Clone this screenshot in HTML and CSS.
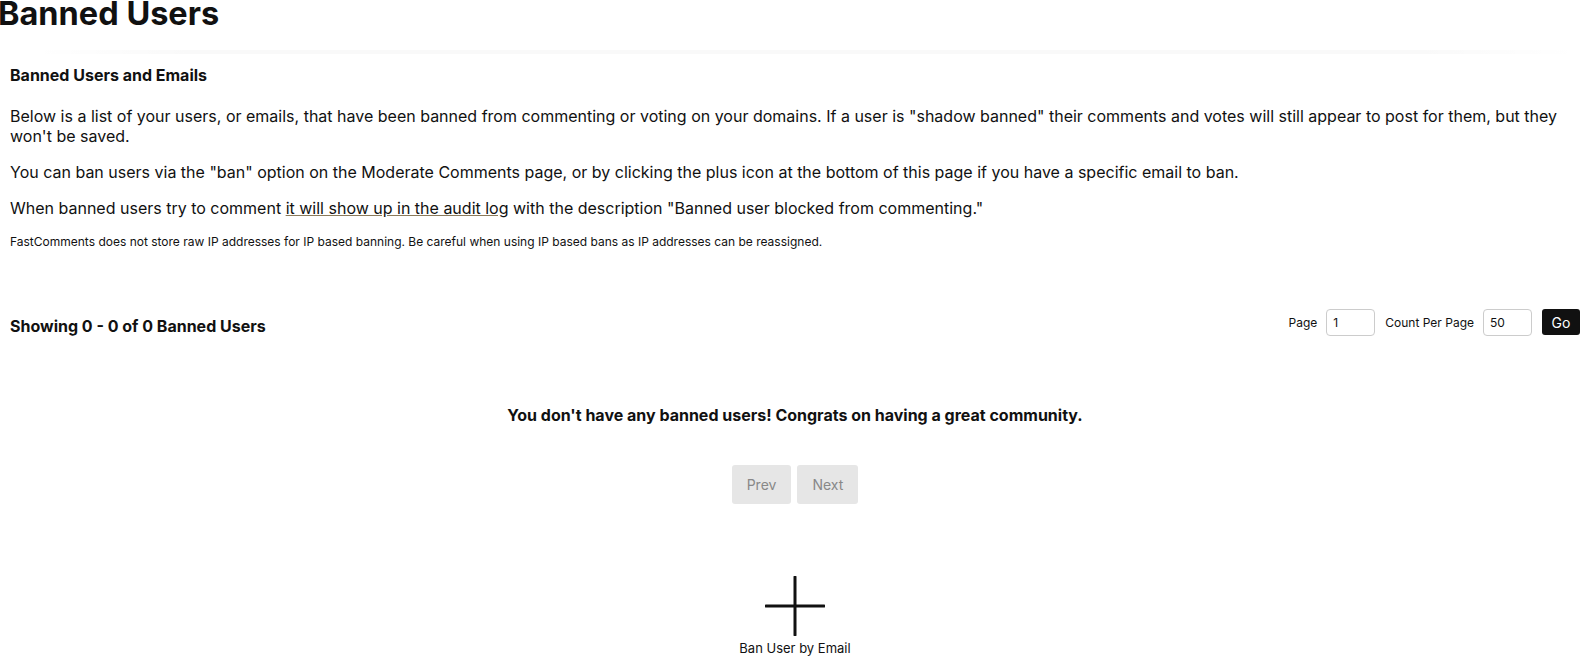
FILE: index.html
```html
<!DOCTYPE html>
<html>
<head>
<meta charset="utf-8">
<link rel="stylesheet" href="styles.css">
</head>
<body>
<h1 class="page-title">Banned Users</h1>
<div class="divider"></div>
<div class="content">
  <div class="section-title">Banned Users and Emails</div>
  <p class="para first">Below is a list of your users, or emails, that have been banned from commenting or voting on your domains. If a user is "shadow banned" their comments and votes will still appear to post for them, but they won't be saved.</p>
  <p class="para">You can ban users via the "ban" option on the Moderate Comments page, or by clicking the plus icon at the bottom of this page if you have a specific email to ban.</p>
  <p class="para">When banned users try to comment <a class="link" href="#">it will show up in the audit log</a> with the description "Banned user blocked from commenting."</p>
  <p class="note">FastComments does not store raw IP addresses for IP based banning. Be careful when using IP based bans as IP addresses can be reassigned.</p>

  <div class="toolbar">
    <div class="showing">Showing 0 - 0 of 0 Banned Users</div>
    <div class="paging">
      <label class="lbl">Page</label>
      <input class="num" type="text" value="1">
      <label class="lbl">Count Per Page</label>
      <input class="num" type="text" value="50">
      <button class="go">Go</button>
    </div>
  </div>

  <div class="empty">You don't have any banned users! Congrats on having a great community.</div>

  <div class="pager">
    <button class="pbtn">Prev</button>
    <button class="pbtn">Next</button>
  </div>

  <div class="add">
    <svg class="plus" width="60" height="60" viewBox="0 0 60 60">
      <line x1="30" y1="1" x2="30" y2="59" stroke="#111" stroke-width="3" stroke-linecap="round"/>
      <line x1="1" y1="30" x2="59" y2="30" stroke="#111" stroke-width="3" stroke-linecap="round"/>
    </svg>
    <div class="add-label">Ban User by Email</div>
  </div>
</div>
</body>
</html>
```
FILE: styles.css
```css
html, body {
  margin: 0;
  padding: 0;
  background: #fff;
  color: #111;
  font-family: Inter, "Noto Sans", sans-serif;
  overflow: hidden;
}
.page-title {
  font-size: 32.5px;
  font-weight: 700;
  line-height: 36px;
  margin: -4px 0 0 -2px;
  height: 54px;
  color: #111;
}
.divider {
  height: 4px;
  margin: 0 10px 0 32px;
  background: linear-gradient(to right, rgba(0,0,0,0), rgba(0,0,0,0.025) 10%, rgba(0,0,0,0.025) 90%, rgba(0,0,0,0));
}
.content {
  padding: 0 10px 0 10px;
}
.section-title {
  font-size: 16px;
  font-weight: 700;
  margin-top: 11px;
  line-height: 20px;
}
.para {
  font-size: 16px;
  line-height: 20px;
  margin: 16px 0 0 0;
}
.para.first {
  margin-top: 21px;
}
.link {
  color: #111;
  text-decoration: underline;
  text-decoration-color: #8a7a5a;
}
.note {
  font-size: 12px;
  line-height: 14px;
  margin: 17px 0 0 0;
}
.toolbar {
  display: flex;
  align-items: center;
  justify-content: space-between;
  margin-top: 59px;
}
.showing {
  font-size: 16px;
  font-weight: 700;
  margin-top: 8px;
}
.paging {
  display: flex;
  align-items: center;
}
.lbl {
  font-size: 12px;
  margin-right: 9px;
}
.num {
  width: 49px;
  height: 27px;
  box-sizing: border-box;
  border: 1px solid #ccc;
  border-radius: 4px;
  font-family: Inter, sans-serif;
  font-size: 12px;
  padding: 0 6px;
  margin-right: 10px;
  color: #111;
}
.go {
  background: #111;
  color: #fff;
  border: none;
  border-radius: 3px;
  height: 26px;
  width: 38px;
  font-family: Inter, sans-serif;
  font-size: 14px;
  padding: 0;
}
.empty {
  text-align: center;
  font-weight: 700;
  font-size: 16px;
  margin-top: 69px;
}
.pager {
  display: flex;
  justify-content: center;
  gap: 6px;
  margin-top: 40px;
}
.pbtn {
  background: #e6e6e6;
  color: #888;
  border: none;
  border-radius: 3px;
  height: 39px;
  padding: 0 15px;
  font-family: Inter, sans-serif;
  font-size: 14px;
}
.add {
  display: flex;
  flex-direction: column;
  align-items: center;
  margin-top: 72px;
}
.plus {
  display: block;
}
.add-label {
  font-size: 13px;
  margin-top: 4px;
}
```
